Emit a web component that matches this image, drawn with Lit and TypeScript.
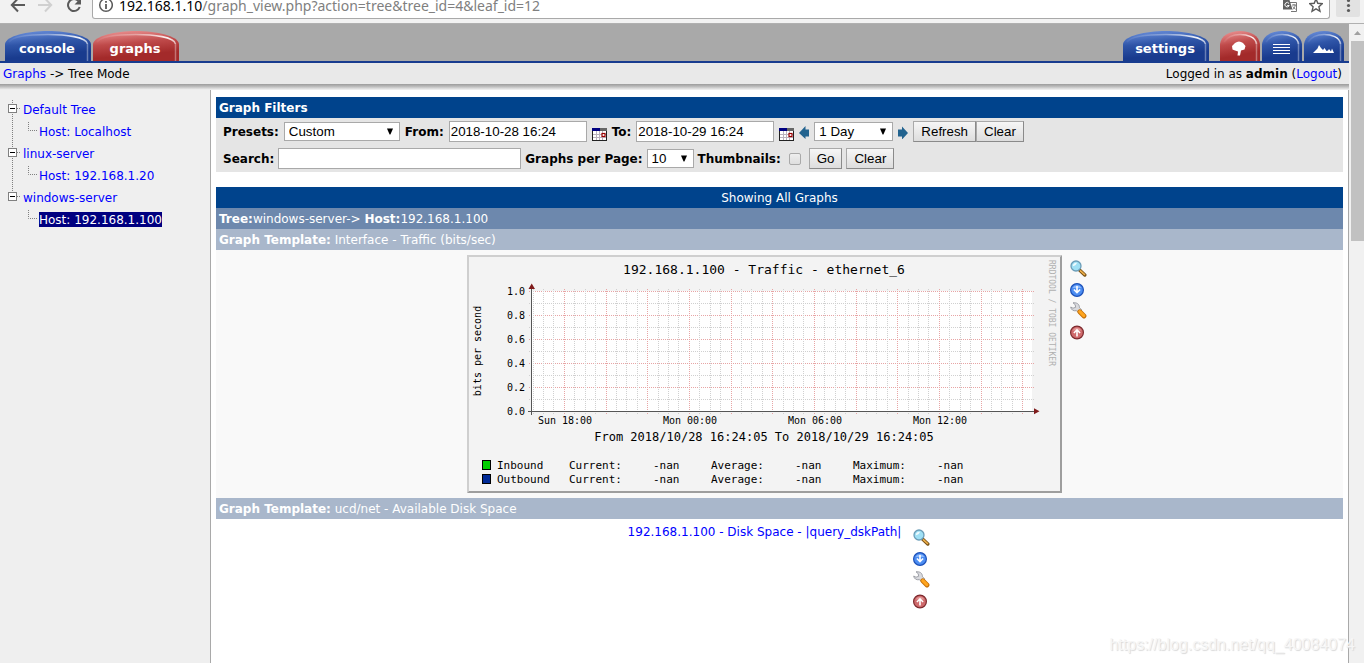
import { LitElement, html, css, svg } from "lit";
import { customElement, property } from "lit/decorators.js";

type TabTone = "blue" | "red";

@customElement("nav-tab")
class NavTab extends LitElement {
  @property() tone: TabTone = "blue";
  @property({ type: Number }) size = 86;
  @property() label = "";

  static styles = css`
    :host { display: block; }
    .tab {
      display: grid;
      place-items: center;
      color: #fff;
      text-decoration: none;
      font: bold 13px "DejaVu Sans", sans-serif;
    }
    .shape, .face { grid-area: 1 / 1; display: block; }
    .face { padding: 6px 2px 0 0; line-height: 18px; }
  `;

  render() {
    const w = this.size;
    const wide = w > 60;
    const bend = wide ? 22 : 9;
    const light = this.tone === "blue" ? "#668bd8" : "#e98e8e";
    const mid = this.tone === "blue" ? "#2f55a8" : "#bf4a4a";
    const deep = this.tone === "blue" ? "#193b8e" : "#a32a2a";
    return html`
      <a class="tab" href="#" aria-label=${this.label}>
        <svg class="shape" width=${w} height="30" viewBox="0 0 ${w} 30" aria-hidden="true">
          <defs>
            <linearGradient id="body" x1="0.3" y1="0" x2="0.55" y2="1">
              <stop offset="0" stop-color=${light} />
              <stop offset="0.4" stop-color=${mid} />
              <stop offset="0.8" stop-color=${deep} />
            </linearGradient>
            <linearGradient id="shine" x1="0" y1="0" x2="1" y2="0">
              <stop offset="0" stop-color="#fff" stop-opacity="0.05" />
              <stop offset="0.5" stop-color="#fff" stop-opacity="0.35" />
              <stop offset="0.9" stop-color="#fff" stop-opacity="0.95" />
              <stop offset="1" stop-color="#fff" stop-opacity="0.6" />
            </linearGradient>
          </defs>
          <path d="M0 30V13C1 5 ${bend} 0 ${w / 2} 0S${w - 1} 5 ${w} 13V30Z" fill="url(#body)" />
          <path d="M4 11C8 5 ${bend + 4} 3.500 ${w / 2} 3.500S${w - 4} 6 ${w - 3.5} 13" fill="none" stroke="url(#shine)" stroke-width="1.600" />
          <path d="M${w - 3.5} 13V30" stroke="#fff" stroke-opacity="0.35" stroke-width="1.500" />
        </svg>
        <span class="face"><slot></slot></span>
      </a>
    `;
  }
}

@customElement("graph-actions")
class GraphActions extends LitElement {
  static styles = css`
    :host { display: flex; flex-direction: column; gap: 4px; padding: 5px 5px 0 0; }
    .action { display: block; width: 17px; height: 17px; }
    .action svg { display: block; }
  `;

  render() {
    return html`
      <a class="action" href="#" aria-label="Zoom Graph">
        <svg width="17" height="17" viewBox="0 0 17 17">
          <path d="M9.500 10l5.300 5" stroke="#7a5418" stroke-width="3.400" stroke-linecap="round" />
          <path d="M10.500 10.800l4 3.700" stroke="#f0b04a" stroke-width="1.600" stroke-linecap="round" />
          <circle cx="6" cy="6" r="5" fill="#9fe0f5" stroke="#6b9db8" stroke-width="1.300" />
          <path d="M2.800 6.200A3.300 3.300 0 0 1 7 2.800C6 5 5 6 2.800 6.200Z" fill="#fff" opacity="0.85" />
        </svg>
      </a>
      <a class="action" href="#" aria-label="CSV Export">
        <svg width="17" height="17" viewBox="0 0 17 17">
          <circle cx="7" cy="9" r="6.400" fill="#4c8df2" stroke="#1c50b8" stroke-width="1.200" />
          <path d="M2.500 7a5 5 0 0 1 9 0Z" fill="#a5cbff" opacity="0.7" />
          <path d="M7 5v6.500M3.900 8.500l3.100 3.200 3.100-3.200" fill="none" stroke="#fff" stroke-width="1.600" />
        </svg>
      </a>
      <a class="action" href="#" aria-label="Graph Source/Properties">
        <svg width="17" height="17" viewBox="0 0 17 17">
          <path d="M3 0.800C6.500 0.300 9.600 2 9.400 5.600L12 8.200 9 11 6.300 8.700C3.400 9.200 1 7.800 0.700 5L3 6.200 5.600 5.300 5.200 2.700Z" fill="#d9dade" stroke="#8d8f98" stroke-width="0.800" />
          <path d="M9.800 9.800l4.200 4.200" stroke="#c36e08" stroke-width="4.800" stroke-linecap="round" />
          <path d="M9.800 9.600l4 4" stroke="#ffa51e" stroke-width="3.200" stroke-linecap="round" />
        </svg>
      </a>
      <a class="action" href="#" aria-label="Page Top">
        <svg width="17" height="17" viewBox="0 0 17 17">
          <circle cx="7" cy="9.500" r="6.400" fill="#cf6a6c" stroke="#7c2a2e" stroke-width="1.200" />
          <path d="M2.500 7.500a5 5 0 0 1 9 0Z" fill="#eeb4b4" opacity="0.6" />
          <path d="M7 13.500V7M3.900 10l3.100-3.200 3.100 3.200" fill="none" stroke="#fff" stroke-width="1.600" />
        </svg>
      </a>
    `;
  }
}

@customElement("traffic-graph")
class TrafficGraph extends LitElement {
  static styles = css`
    :host { display: block; }
    .graph { display: block; }
    text { font-family: "DejaVu Sans Mono", monospace; fill: #000; }
    .title { font-size: 13px; text-anchor: middle; }
    .tick { font-size: 10px; text-anchor: middle; }
    .value { font-size: 10px; text-anchor: end; }
    .legend { font-size: 11px; }
    .range { font-size: 12px; text-anchor: middle; }
    .credit { font-size: 8px; fill: #b0b0b0; }
    .minor { stroke: #d0d0d0; stroke-dasharray: 1 1; }
    .major { stroke: #e8a5a5; stroke-dasharray: 1 1; }
  `;

  render() {
    const left = 64;
    const base = 156;
    const rows = Array.from({ length: 11 }, (_, i) => i);
    const cols = Array.from({ length: 48 }, (_, i) => i - 3);
    const legend = [
      { name: "Inbound", color: "#00cf00", y: 214 },
      { name: "Outbound", color: "#002a97", y: 228 },
    ];
    return html`
      <svg class="graph" width="595" height="238" viewBox="0 0 595 238" role="img" aria-label="192.168.1.100 - Traffic - ethernet_6">
        <rect width="595" height="238" fill="#f3f3f3" />
        <path d="M0 238V0H595L593 2H2V236Z" fill="#cfcfcf" />
        <path d="M0 238H595V0L593 2V236H2Z" fill="#9e9e9e" />
        <rect x=${left} y="36" width="501" height="121" fill="#fff" />
        ${rows.map((i) => svg`<path class=${i % 2 ? "minor" : "major"} d="M${left - 2} ${base - i * 12 + 0.5}H567" />`)}
        ${cols.map((i) => {
          const x = Math.floor(97.4 + i * 10.417) + 0.5;
          return x < 565 ? svg`<path class=${i % 4 ? "minor" : "major"} d="M${x} 34V159" />` : null;
        })}
        <path d="M64.500 34V160M61 156.500H568" stroke="#555" fill="none" />
        <path d="M61.500 34l3.200-5.500L68 34ZM567 153.300l5.500 3-5.500 3Z" fill="#7f1b1b" />
        <text class="title" x="297" y="19">192.168.1.100 - Traffic - ethernet_6</text>
        ${["0.0", "0.2", "0.4", "0.6", "0.8", "1.0"].map((v, i) => svg`<text class="value" x="58" y=${base + 4 - i * 24}>${v}</text>`)}
        ${["Sun 18:00", "Mon 00:00", "Mon 06:00", "Mon 12:00"].map((v, i) => svg`<text class="tick" x=${98 + i * 125} y="169">${v}</text>`)}
        <text class="tick" transform="translate(14 96) rotate(-90)">bits per second</text>
        <text class="credit" transform="translate(582 5) rotate(90)">RRDTOOL / TOBI OETIKER</text>
        <text class="range" x="297" y="186">From 2018/10/28 16:24:05 To 2018/10/29 16:24:05</text>
        ${legend.map((row) => svg`
          <rect x="15.500" y=${row.y - 8.5} width="8" height="9" fill=${row.color} stroke="#000" />
          <text class="legend" x="30" y=${row.y}>${row.name}</text>
          ${["Current:", "Average:", "Maximum:"].map((name, i) => svg`
            <text class="legend" x=${102 + i * 142} y=${row.y}>${name}</text>
            <text class="legend" x=${186 + i * 142} y=${row.y}>-nan</text>`)}
        `)}
      </svg>
    `;
  }
}

const calendar = html`
  <svg class="calendar" width="15" height="13" viewBox="0 0 15 13" aria-hidden="true">
    <rect width="15" height="13" fill="#222" />
    <rect x="1" y="3" width="13" height="9" fill="#fff" />
    <rect width="8" height="3" fill="#000080" /><rect x="8" width="7" height="3" fill="#666" />
    <path d="M1 6.500h13M1 9.500h13M4.500 3v9M7.500 3v9M10.500 3v9" stroke="#b9b2bd" />
    <rect x="10" y="5.500" width="3" height="3" fill="#fff" stroke="#900" stroke-width="1.200" />
  </svg>`;

@customElement("app-root")
class AppRoot extends LitElement {
  static styles = css`
    :host {
      display: flex;
      flex-direction: column;
      position: relative;
      min-height: 100vh;
      font: 12px/19px "DejaVu Sans", Verdana, sans-serif;
      color: #000;
      background: #fff;
    }
    * { box-sizing: border-box; }
    a { color: #00f; text-decoration: none; }
    svg { display: block; }

    .browser { display: flex; align-items: flex-start; height: 24px; background: #f2f2f2; border-bottom: 1px solid #b0b0b0; }
    .browser-nav { display: flex; width: 92px; padding-left: 10px; gap: 12px; }
    .address {
      flex: 1; display: flex; justify-content: space-between; height: 19px; padding: 0 6px 0 5px;
      background: #fff; border: 1px solid #a9a9a9; border-top: 0; border-radius: 0 0 3px 3px;
    }
    .url { display: flex; gap: 6px; font: 14px/11px "Noto Sans", sans-serif; color: #808080; }
    .url b { font-weight: normal; color: #000; }
    .address-tools { display: flex; gap: 11px; }
    .menu { width: 24px; height: 17px; margin: 0 4px 0 6px; background: #e2e2e2; border-radius: 0 0 2px 2px; }

    .frame { display: flex; flex: 1; }
    .page { flex: 1; display: flex; flex-direction: column; min-width: 0; }
    .scrollbar { width: 15px; background: #f1f1f1; padding-left: 2px; }
    .scroll-up { display: grid; place-items: center; height: 17px; }
    .thumb { height: 200px; background: #c1c1c1; }

    .tabs { display: flex; align-items: flex-end; height: 39px; padding: 0 5px; gap: 2px; background: #a9a9a9; border-bottom: 2px solid #183c8f; }
    .spacer { flex: 1; }
    .icon-tabs { display: flex; gap: 2px; padding-left: 9px; }
    .crumbs { display: flex; justify-content: space-between; padding: 2px 7px 0 3px; background: #e9e9e9; }
    .shade { height: 6px; background: linear-gradient(#9c9c9c, #b5b5b5 35%, #f3f3f3); }

    .columns { display: flex; flex: 1; }
    .sidebar { width: 211px; padding-top: 8px; background: #efefef; border-right: 1px solid #a9a9a9; }
    .tree { list-style: none; margin: 0; padding: 0; }
    .node { display: flex; align-items: center; height: 22px; line-height: 14px; }
    .node a { padding-top: 1px; }
    .node .selected { color: #fff; background: #000080; }

    .main { flex: 1; min-width: 0; padding: 7px 5px 0; border-right: 1px solid #a9a9a9; }
    .bar { margin: 0; padding: 2px 3px 0; font: inherit; color: #fff; }
    .strong { background: #00438c; }
    .middle { background: #6d88ad; }
    .soft { background: #a9b7cb; }
    .center { text-align: center; }

    .filters { display: flex; flex-direction: column; gap: 6px; padding: 3px 7px; margin-bottom: 15px; background: #e5e5e5; }
    .line { display: flex; align-items: center; gap: 4px; height: 21px; }
    .period { gap: 5px; }
    .line label { font-weight: bold; white-space: nowrap; padding-top: 1px; }
    .line input, .line button, .line select { font-family: "Liberation Sans", Arial, sans-serif; color: #000; margin: 0; flex: none; }
    .line input { height: 21px; padding: 1px; border: 1px solid #a9a9a9; background: #fff; }
    .date { width: 138px; }
    .search { width: 243px; }
    .pick { position: relative; display: flex; }
    .pick select { appearance: none; height: 19px; padding: 0 4px; border: 1px solid #a9a9a9; border-radius: 0; background: #fff; }
    .pick svg { position: absolute; right: 6px; top: 6px; pointer-events: none; }
    .preset select { width: 116px; }
    .span select { width: 79px; }
    .count select { width: 47px; }
    .line button {
      height: 21px; padding: 0 7px; border: 1px solid #999; border-color: #a9a9a9 #8a8a8a #8a8a8a #a9a9a9; border-radius: 0;
      background: linear-gradient(#f6f6f6, #dddddd);
    }
    .pair { display: flex; }
    .go-pair { display: flex; gap: 4px; padding-left: 4px; }
    .calendar { align-self: flex-end; margin-bottom: 1px; }
    .line .tick-box { appearance: none; width: 12px; height: 12px; margin-left: 4px; border: 1px solid #a9a9a9; border-radius: 2px; background: linear-gradient(#eee, #dedede); }

    .graph-row { display: flex; justify-content: center; align-items: flex-start; gap: 8px; padding: 5px 0; }
    .tinted { background: #f9f9f9; }
    .graph-link { line-height: 16px; padding: 0 4px; }
    .watermark {
      position: absolute; right: 9px; bottom: 8px; font: 16px/20px "Liberation Sans", Arial, sans-serif;
      color: #f6f6f6; text-shadow: 1px 1px 1px #d8d8d8; pointer-events: none;
    }
  `;

  private arrow = () => html`<svg width="8" height="7" viewBox="0 0 8 7" aria-hidden="true"><path d="M1 0.500H7L4.400 6.500H3.600Z" fill="#000" /></svg>`;

  private branch(hasBelow: boolean, first: boolean) {
    return html`<svg width="23" height="22" viewBox="0 0 23 22" aria-hidden="true">
      <path d="M12.500 ${first ? 2 : 0}V${hasBelow ? 22 : 11}M17 10.500H21" stroke="#808080" stroke-dasharray="1 1" />
      <rect x="8.500" y="6.500" width="8" height="8" fill="#fff" stroke="#808080" />
      <path d="M10 10.500h5" stroke="#000" />
    </svg>`;
  }

  private leaf(hasBelow: boolean) {
    return html`<svg width="39" height="22" viewBox="0 0 39 22" aria-hidden="true">
      <path d="M${hasBelow ? "12.500 0V22M" : ""}28.500 2V10.500H37" fill="none" stroke="#808080" stroke-dasharray="1 1" />
    </svg>`;
  }

  render() {
    const tree = [
      { name: "Default Tree", host: "Host: Localhost" },
      { name: "linux-server", host: "Host: 192.168.1.20" },
      { name: "windows-server", host: "Host: 192.168.1.100", selected: true },
    ];
    return html`
      <div class="browser">
        <div class="browser-nav">
          <svg width="16" height="14" viewBox="0 0 16 14"><path d="M15 5H2M8-1.500L1.800 5 8 11.500" fill="none" stroke="#5a5a5a" stroke-width="2" /></svg>
          <svg width="16" height="14" viewBox="0 0 16 14"><path d="M0 5H13M7-1.500L13.200 5 7 11.500" fill="none" stroke="#d0d0d0" stroke-width="2" /></svg>
          <svg width="16" height="14" viewBox="0 0 16 14"><path d="M12.500 1A6 6 0 1 0 13.700 7" fill="none" stroke="#5a5a5a" stroke-width="2" /><path d="M8.500 4.500H15V-2Z" fill="#5a5a5a" /></svg>
        </div>
        <div class="address">
          <div class="url">
            <svg width="15" height="13" viewBox="0 0 15 13"><circle cx="8" cy="5" r="6.300" fill="none" stroke="#5a5a5a" stroke-width="1.500" /><path d="M8 4v5M8 1v1.700" stroke="#5a5a5a" stroke-width="1.800" /></svg>
            <span><b>192.168.1.10</b>/graph_view.php?action=tree&amp;tree_id=4&amp;leaf_id=12</span>
          </div>
          <div class="address-tools">
            <svg width="15" height="14" viewBox="0 0 15 14"><path d="M6 2.500h7.500v9H8" fill="#fff" stroke="#777" /><path d="M0 0h6.500l3 9.500H0Z" fill="#606060" /><path d="M6 3.500A2.200 2.200 0 1 0 6.200 5.500H4.200" fill="none" stroke="#fff" /><path d="M9 5h4M11 4v1M9.700 9.500C11 8.500 12 7 12.200 5M9.800 6.500L12.700 9.500" fill="none" stroke="#777" /></svg>
            <svg width="14" height="13" viewBox="0 0 14 13"><path d="M7-1l1.800 4.300 4.600.4L9.900 6.800 11 11.300 7 8.900 3 11.300 4.100 6.800.6 3.700l4.600-.4Z" fill="none" stroke="#5a5a5a" stroke-width="1.400" /></svg>
          </div>
        </div>
        <div class="menu"><svg width="24" height="17" viewBox="0 0 24 17"><circle cx="12.500" cy="0.500" r="1.600" fill="#5a5a5a" /><circle cx="12.500" cy="5.500" r="1.600" fill="#5a5a5a" /><circle cx="12.500" cy="10.500" r="1.600" fill="#5a5a5a" /></svg></div>
      </div>

      <div class="frame">
        <div class="page">
          <nav class="tabs">
            <nav-tab label="console">console</nav-tab>
            <nav-tab label="graphs" tone="red">graphs</nav-tab>
            <span class="spacer"></span>
            <nav-tab label="settings">settings</nav-tab>
            <div class="icon-tabs">
              <nav-tab label="Tree View" tone="red" size="40">
                <svg width="16" height="16" viewBox="0 0 16 16"><path d="M4 2Q8-1 12 2L14.500 5 13.500 8.500 10 9.500 9 14.500H6.500L7 10.500 4 9.500 1.500 8.500 1 5Z" fill="#fff" /></svg>
              </nav-tab>
              <nav-tab label="List View" size="40">
                <svg width="17" height="12" viewBox="0 0 17 12"><path d="M0 1.500H17M0 4.500H17M0 7.500H17M0 10.500H17" stroke="#fff" /></svg>
              </nav-tab>
              <nav-tab label="Preview View" size="40">
                <svg width="21" height="10" viewBox="0 0 21 10"><path d="M0 9L3 6 4.500 4.500 6 1 8 4 10 6 11.500 4 13.500 7 15 6.500 16 5 18 7.500 19 4.500 21 9Z" fill="#fff" /></svg>
              </nav-tab>
            </div>
          </nav>
          <div class="crumbs">
            <span><a href="#">Graphs</a> -&gt; Tree Mode</span>
            <span>Logged in as <b>admin</b> (<a href="#">Logout</a>)</span>
          </div>
          <div class="shade"></div>

          <div class="columns">
            <aside class="sidebar">
              <ul class="tree">
                ${tree.map((item, i) => html`
                  <li class="node">${this.branch(i < tree.length - 1, i === 0)}<a href="#">${item.name}</a></li>
                  <li class="node">${this.leaf(i < tree.length - 1)}<a class=${item.selected ? "selected" : ""} href="#">${item.host}</a></li>
                `)}
              </ul>
            </aside>

            <main class="main">
              <h2 class="bar strong"><b>Graph Filters</b></h2>
              <form class="filters" @submit=${(e: Event) => e.preventDefault()}>
                <div class="line period">
                  <label for="preset">Presets:</label>
                  <span class="pick preset"><select id="preset"><option>Custom</option></select>${this.arrow()}</span>
                  <label for="from">From:</label>
                  <input class="date" id="from" type="text" value="2018-10-28 16:24" />
                  ${calendar}
                  <label for="to">To:</label>
                  <input class="date" id="to" type="text" value="2018-10-29 16:24" />
                  ${calendar}
                  <svg width="10" height="14" viewBox="0 0 10 14"><path d="M0 8L6.500 1V4.500H10V11.500H6.500V14Z" fill="#22638f" /></svg>
                  <span class="pick span"><select aria-label="Timespan"><option>1 Day</option></select>${this.arrow()}</span>
                  <svg width="10" height="14" viewBox="0 0 10 14"><path d="M10 8L4 1.500V4.500H0V11.500H4V14.500Z" fill="#22638f" /></svg>
                  <span class="pair"><button type="button">Refresh</button><button type="button">Clear</button></span>
                </div>
                <div class="line">
                  <label for="search">Search:</label>
                  <input class="search" id="search" type="text" />
                  <label for="count">Graphs per Page:</label>
                  <span class="pick count"><select id="count"><option>10</option></select>${this.arrow()}</span>
                  <label for="thumbs">Thumbnails:</label>
                  <input class="tick-box" id="thumbs" type="checkbox" />
                  <span class="go-pair"><button type="submit">Go</button><button type="button">Clear</button></span>
                </div>
              </form>

              <div class="bar strong center">Showing All Graphs</div>
              <div class="bar middle"><b>Tree:</b>windows-server-&gt; <b>Host:</b>192.168.1.100</div>
              <div class="bar soft"><b>Graph Template:</b> Interface - Traffic (bits/sec)</div>
              <div class="graph-row tinted">
                <traffic-graph></traffic-graph>
                <graph-actions></graph-actions>
              </div>
              <div class="bar soft"><b>Graph Template:</b> ucd/net - Available Disk Space</div>
              <div class="graph-row">
                <a class="graph-link" href="#">192.168.1.100 - Disk Space - |query_dskPath|</a>
                <graph-actions></graph-actions>
              </div>
            </main>
          </div>
        </div>
        <div class="scrollbar" aria-hidden="true">
          <div class="scroll-up"><svg width="7" height="4" viewBox="0 0 7 4"><path d="M0 4L3.500 0 7 4Z" fill="#a0a0a0" /></svg></div>
          <div class="thumb"></div>
        </div>
      </div>
      <div class="watermark">https://blog.csdn.net/qq_40084074</div>
    `;
  }
}
